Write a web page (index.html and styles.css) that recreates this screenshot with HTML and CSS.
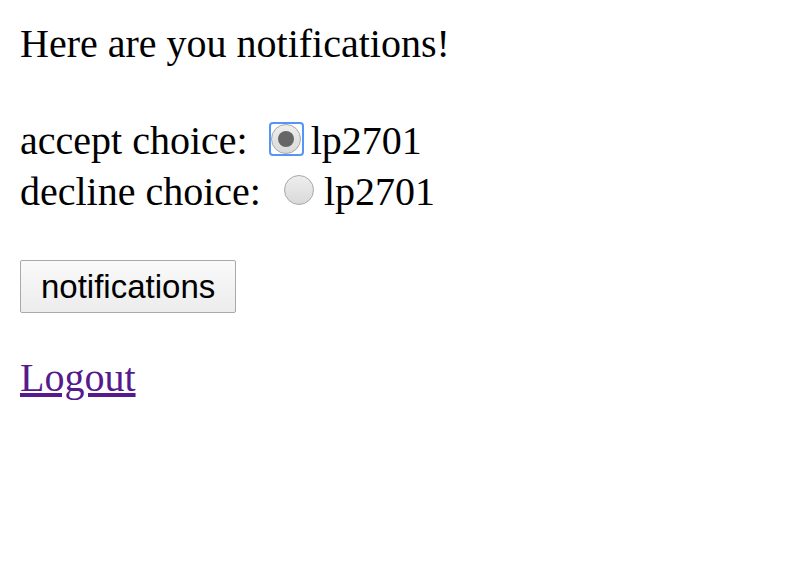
FILE: index.html
```html
<!DOCTYPE html>
<html>
<head>
<meta charset="utf-8">
<link rel="stylesheet" href="styles.css">
</head>
<body>
<div class="intro">Here are you notifications!</div>
<form class="choices">
<div class="choice">accept choice: <input class="radio focused" type="radio" name="choice" checked>lp2701</div>
<div class="choice">decline choice: <input class="radio" type="radio" name="choice">lp2701</div>
<div class="actions"><button class="btn" type="button">notifications</button></div>
</form>
<p class="logout-row"><a class="logout" href="#">Logout</a></p>
</body>
</html>
```
FILE: styles.css
```css
html { background: #fff; }
body {
  margin: 20px;
  font-family: "Liberation Serif", "Times New Roman", serif;
  font-size: 40px;
  color: #000;
}
.intro { margin-bottom: 46px; }
.choices { margin: 0; }
.radio {
  -webkit-appearance: none;
  appearance: none;
  position: relative;
  box-sizing: border-box;
  width: 30px;
  height: 30px;
  margin: 11px 10px 0 13px;
  border: 1px solid #a8a8a8;
  border-radius: 50%;
  background: linear-gradient(#eeeeee, #d9d9d9);
  vertical-align: baseline;
}
.radio:checked::before {
  content: "";
  position: absolute;
  left: 6px;
  top: 6px;
  width: 16px;
  height: 16px;
  border-radius: 50%;
  background: #666;
}
.radio.focused::after {
  content: "";
  position: absolute;
  left: -3px;
  top: -3px;
  right: -4px;
  bottom: -3px;
  border: 2px solid #5595f6;
  border-radius: 4px;
}
.radio:focus { outline: none; }
.actions { margin-top: 45px; }
.btn {
  display: block;
  font-family: "Liberation Sans", Arial, sans-serif;
  font-size: 33px;
  height: 53px;
  padding: 0 20px;
  margin: 0;
  border: 1px solid #a9a9a9;
  border-radius: 2px;
  background: linear-gradient(#fafafa, #ececec);
  color: #000;
}
.logout-row { margin: 41px 0 0; }
.logout { color: #551a8b; }
```
